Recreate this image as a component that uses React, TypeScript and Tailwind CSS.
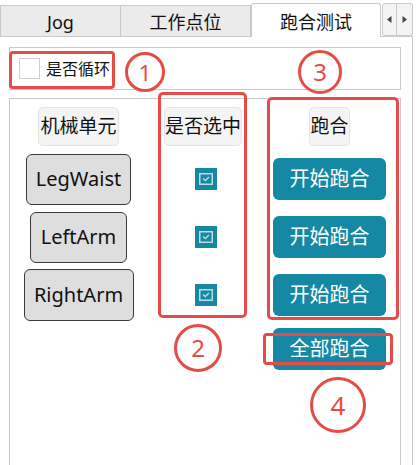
import React from "react";

const font = { fontFamily: '"Noto Sans", "Noto Sans CJK SC", sans-serif' };

function CheckIcon() {
  return (
    <div className="w-[22px] h-[22px] bg-[#1887a1] flex items-center justify-center">
      <svg width="14" height="12" viewBox="0 0 14 12">
        <rect x="0.75" y="0.75" width="12.5" height="10.5" fill="none" stroke="#b9dde6" strokeWidth="1.5" />
        <path d="M4 5.5 L6.3 7.6 L10 4" fill="none" stroke="#b9dde6" strokeWidth="1.4" />
      </svg>
    </div>
  );
}

function Circle({ n, className }: { n: string; className: string }) {
  return (
    <div
      className={`absolute rounded-full border-[3px] border-[#e64c47] flex items-center justify-center text-[#e64c47] ${className}`}
    >
      {n}
    </div>
  );
}

export default function App() {
  const units = [
    { name: "LegWaist", w: "w-[105px]", h: "h-[51px]" },
    { name: "LeftArm", w: "w-[97px]", h: "h-[51px]" },
    { name: "RightArm", w: "w-[110px]", h: "h-[52px]" },
  ];

  return (
    <div className="relative w-[417px] h-[465px] bg-white overflow-hidden text-[#111]" style={font}>
      {/* tab bar */}
      <div className="flex items-end h-[36px]">
        <div className="w-[121px] h-[31px] bg-[#ebebeb] border border-b-0 border-[#c9c9c9] flex items-center justify-center text-[18px] pt-[3px]">
          Jog
        </div>
        <div className="w-[130px] h-[31px] bg-[#ebebeb] border border-l-0 border-b-0 border-[#c9c9c9] flex items-center justify-center text-[18px] pt-[3px]">
          工作点位
        </div>
        <div className="w-[130px] h-[34px] bg-white border border-b-0 border-[#c9c9c9] rounded-t-[3px] flex items-center justify-center text-[18px] relative z-10 -mb-px pt-[3px]">
          跑合测试
        </div>
        <div className="flex h-[33px] ml-[1px]">
          <div className="w-[15px] bg-[#f4f4f4] border border-[#c9c9c9] rounded-l-[3px] flex items-center justify-center">
            <svg width="5" height="7" viewBox="0 0 5 7"><path d="M4.5 0 L0 3.5 L4.5 7 Z" fill="#444" /></svg>
          </div>
          <div className="w-[16px] bg-[#f4f4f4] border border-l-0 border-[#c9c9c9] rounded-r-[3px] flex items-center justify-center">
            <svg width="5" height="7" viewBox="0 0 5 7"><path d="M0.5 0 L5 3.5 L0.5 7 Z" fill="#444" /></svg>
          </div>
        </div>
      </div>

      {/* pane */}
      <div className="w-[413px] h-[429px] border-t border-r border-[#c9c9c9] pl-[9px] pt-[10px]">
        <div className="w-[392px] h-[43px] border border-[#c9c9c9] flex items-center pl-[9px] gap-[6px]">
          <div className="w-[21px] h-[21px] border border-[#cfcfcf] bg-white" />
          <span className="text-[16px]">是否循环</span>
        </div>

        <div className="mt-[8px] w-[392px] h-[400px] border border-b-0 border-[#c9c9c9] pt-[8px] grid grid-cols-[137px_112px_141px] grid-rows-[39px_4px_58px_58px_58px_4px_42px]">
          {/* headers */}
          <div className="flex justify-center row-start-1 col-start-1">
            <div className="w-[81px] h-[39px] bg-[#f4f4f4] border border-[#e4e4e4] rounded-[5px] flex items-center justify-center text-[19px] whitespace-nowrap">
              机械单元
            </div>
          </div>
          <div className="flex justify-center row-start-1 col-start-2">
            <div className="w-[78px] h-[39px] bg-[#f4f4f4] border border-[#e4e4e4] rounded-[5px] flex items-center justify-center text-[19px] whitespace-nowrap">
              是否选中
            </div>
          </div>
          <div className="flex justify-center row-start-1 col-start-3">
            <div className="w-[41px] h-[39px] bg-[#f4f4f4] border border-[#e4e4e4] rounded-[5px] flex items-center justify-center text-[19px] whitespace-nowrap">
              跑合
            </div>
          </div>

          {units.map((u, i) => (
            <React.Fragment key={u.name}>
              <div className="col-start-1 flex items-center justify-center" style={{ gridRowStart: i + 3 }}>
                <div className={`${u.w} ${u.h} bg-[#dedede] border border-[#3a3a3a] rounded-[6px] flex items-center justify-center text-[20px]`}>
                  {u.name}
                </div>
              </div>
              <div className="col-start-2 flex items-center justify-center pl-[6px]" style={{ gridRowStart: i + 3 }}>
                <CheckIcon />
              </div>
              <div className="col-start-3 flex items-center justify-center" style={{ gridRowStart: i + 3 }}>
                <div className="w-[113px] h-[42px] bg-[#1589a3] rounded-[6px] flex items-center justify-center text-white text-[20px]">
                  开始跑合
                </div>
              </div>
            </React.Fragment>
          ))}

          <div className="col-start-3 row-start-7 flex justify-center">
            <div className="w-[113px] h-[42px] bg-[#1589a3] rounded-[6px] flex items-center justify-center text-white text-[20px]">
              全部跑合
            </div>
          </div>
        </div>
      </div>

      {/* annotations */}
      <div className="absolute left-[9px] top-[51px] w-[106px] h-[38px] border-[3px] border-[#e64c47] rounded-[4px]" />
      <div className="absolute left-[158px] top-[92px] w-[89px] h-[226px] border-[3px] border-[#e64c47] rounded-[5px]" />
      <div className="absolute left-[267px] top-[97px] w-[132px] h-[223px] border-[3px] border-[#e64c47] rounded-[5px]" />
      <div className="absolute left-[263px] top-[333px] w-[130px] h-[32px] border-[3px] border-[#e64c47] rounded-[4px]" />

      <Circle n="1" className="left-[125px] top-[52px] w-[40px] h-[40px] text-[22px]" />
      <Circle n="3" className="left-[298px] top-[50px] w-[44px] h-[44px] text-[24px]" />
      <Circle n="2" className="left-[174px] top-[324px] w-[48px] h-[48px] text-[24px]" />
      <Circle n="4" className="left-[310px] top-[377px] w-[56px] h-[56px] text-[26px]" />
    </div>
  );
}
